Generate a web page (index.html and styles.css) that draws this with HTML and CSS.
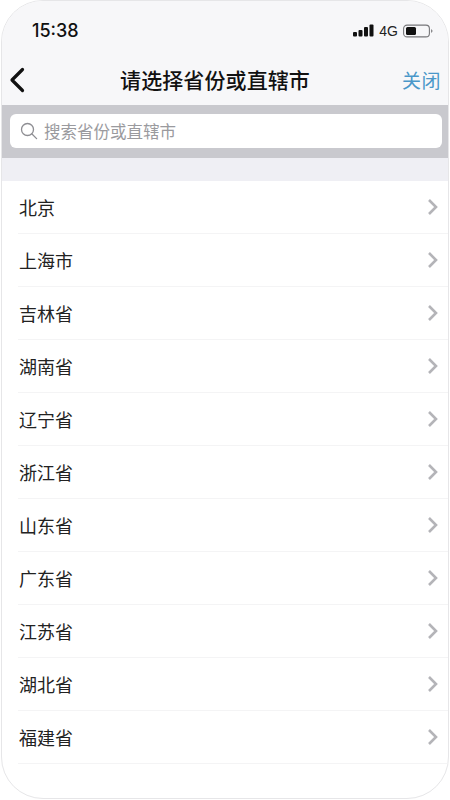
FILE: index.html
```html
<!DOCTYPE html>
<html lang="zh">
<head>
<meta charset="utf-8">
<title>请选择省份或直辖市</title>
<link rel="stylesheet" href="styles.css">
</head>
<body>
<div class="phone">
  <div class="status">
    <span class="time">15:38</span>
    <div class="status-right">
      <svg class="signal" width="21" height="13" viewBox="0 0 21 13"><rect x="0" y="8" width="4" height="4.5" rx="1"/><rect x="5.5" y="6" width="4" height="6.5" rx="1"/><rect x="11" y="3" width="4" height="9.5" rx="1"/><rect x="16.5" y="0.5" width="4" height="12" rx="1"/></svg>
      <span class="net">4G</span>
      <svg class="battery" width="30" height="14" viewBox="0 0 30 14"><rect x="0.6" y="1.1" width="25.8" height="11.8" rx="3.5" fill="none" stroke="#77777a" stroke-width="1.1"/><rect x="3" y="3" width="10" height="8" rx="1.5" fill="#111"/><path d="M28 5.2c1.1.3 1.5 1 1.5 1.8s-.4 1.5-1.5 1.8z" fill="#8a8a8d"/></svg>
    </div>
  </div>
  <div class="nav">
    <svg class="back" width="16" height="26" viewBox="0 0 16 26"><path d="M13.5 2.5 3 13l10.5 10.5" fill="none" stroke="#111" stroke-width="3.2" stroke-linecap="round" stroke-linejoin="round"/></svg>
    <h1 class="title">请选择省份或直辖市</h1>
    <span class="close">关闭</span>
  </div>
  <div class="searchbar">
    <div class="search">
      <svg class="search-icon" width="18" height="18" viewBox="0 0 18 18"><circle cx="7.5" cy="7.5" r="6" fill="none" stroke="#8e8e93" stroke-width="1.3"/><path d="m12 12 4.6 4.6" stroke="#8e8e93" stroke-width="1.3" stroke-linecap="round"/></svg>
      <span class="placeholder">搜索省份或直辖市</span>
    </div>
  </div>
  <div class="spacer"></div>
  <ul class="list">
    <li class="row"><span>北京</span><svg class="chev" width="11" height="18" viewBox="0 0 11 18"><path d="m2 2 7 7-7 7" fill="none" stroke="#b4b4b8" stroke-width="2.6"/></svg></li>
    <li class="row"><span>上海市</span><svg class="chev" width="11" height="18" viewBox="0 0 11 18"><path d="m2 2 7 7-7 7" fill="none" stroke="#b4b4b8" stroke-width="2.6"/></svg></li>
    <li class="row"><span>吉林省</span><svg class="chev" width="11" height="18" viewBox="0 0 11 18"><path d="m2 2 7 7-7 7" fill="none" stroke="#b4b4b8" stroke-width="2.6"/></svg></li>
    <li class="row"><span>湖南省</span><svg class="chev" width="11" height="18" viewBox="0 0 11 18"><path d="m2 2 7 7-7 7" fill="none" stroke="#b4b4b8" stroke-width="2.6"/></svg></li>
    <li class="row"><span>辽宁省</span><svg class="chev" width="11" height="18" viewBox="0 0 11 18"><path d="m2 2 7 7-7 7" fill="none" stroke="#b4b4b8" stroke-width="2.6"/></svg></li>
    <li class="row"><span>浙江省</span><svg class="chev" width="11" height="18" viewBox="0 0 11 18"><path d="m2 2 7 7-7 7" fill="none" stroke="#b4b4b8" stroke-width="2.6"/></svg></li>
    <li class="row"><span>山东省</span><svg class="chev" width="11" height="18" viewBox="0 0 11 18"><path d="m2 2 7 7-7 7" fill="none" stroke="#b4b4b8" stroke-width="2.6"/></svg></li>
    <li class="row"><span>广东省</span><svg class="chev" width="11" height="18" viewBox="0 0 11 18"><path d="m2 2 7 7-7 7" fill="none" stroke="#b4b4b8" stroke-width="2.6"/></svg></li>
    <li class="row"><span>江苏省</span><svg class="chev" width="11" height="18" viewBox="0 0 11 18"><path d="m2 2 7 7-7 7" fill="none" stroke="#b4b4b8" stroke-width="2.6"/></svg></li>
    <li class="row"><span>湖北省</span><svg class="chev" width="11" height="18" viewBox="0 0 11 18"><path d="m2 2 7 7-7 7" fill="none" stroke="#b4b4b8" stroke-width="2.6"/></svg></li>
    <li class="row"><span>福建省</span><svg class="chev" width="11" height="18" viewBox="0 0 11 18"><path d="m2 2 7 7-7 7" fill="none" stroke="#b4b4b8" stroke-width="2.6"/></svg></li>
  </ul>
</div>
</body>
</html>
```
FILE: styles.css
```css
* { box-sizing: border-box; }
html, body { margin: 0; padding: 0; background: #fff; }
body { width: 450px; height: 800px; overflow: hidden; font-family: "Noto Sans CJK SC", "Liberation Sans", sans-serif; }
.phone {
  width: 448px; height: 799px; margin-left: 1px;
  background: #fff; border: 1px solid #e6e6e8; border-radius: 42px; overflow: hidden;
  display: flex; flex-direction: column;
}
.status {
  height: 53px; background: #f7f7f9; padding: 6px 15px 0 30px;
  display: flex; align-items: center; justify-content: space-between;
}
.time { font-family: Inter, "Liberation Sans", sans-serif; font-size: 18px; font-weight: 500; color: #111; }
.status-right { display: flex; align-items: center; gap: 5px; }
.signal { fill: #111; }
.net { font-family: "Liberation Sans", sans-serif; font-size: 14px; color: #222; }
.nav {
  height: 51px; background: #f7f7f9; padding: 0 7px 0 7px;
  display: flex; align-items: center; justify-content: space-between;
}
.back { flex: none; }
.title { margin: 0; font-size: 21px; font-weight: 500; color: #111; line-height: 1; margin-left: 3px; letter-spacing: 0.1px; }
.close { font-size: 19px; color: #4a97c9; letter-spacing: 0.5px; }
.searchbar { height: 53px; background: #c9c9ce; padding: 9px 6px 10px 8px; }
.search {
  height: 34px; background: #fff; border-radius: 6px; padding: 0 10px;
  display: flex; align-items: center; gap: 6px;
}
.search-icon { flex: none; }
.placeholder { font-size: 16.5px; color: #9a9a9e; }
.spacer { height: 23px; background: #efeff4; }
.list { list-style: none; margin: 0; padding: 0 0 0 16px; }
.row {
  height: 53px; padding: 0 10px 0 1px;
  display: flex; align-items: center; justify-content: space-between;
  border-bottom: 1px solid #f4f4f5;
  font-size: 18px; color: #222;
}
```
